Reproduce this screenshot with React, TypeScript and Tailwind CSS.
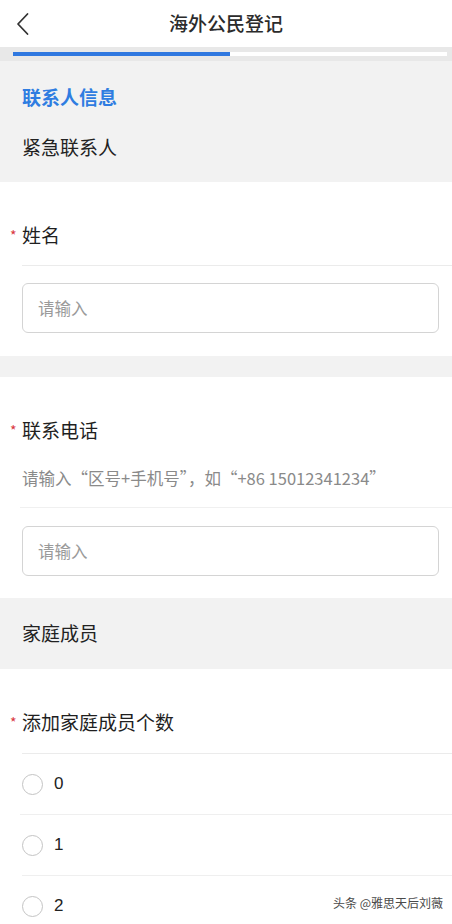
import React from "react";

const font = { fontFamily: '"Noto Sans CJK SC", "Noto Sans", sans-serif' };

function Star() {
  return <span className="absolute left-[10px] top-[3px] text-[14px] leading-[20px] text-[#d9363e]">*</span>;
}

function Label({ text }: { text: string }) {
  return (
    <div className="relative pl-[22px] text-[19px] leading-[26px] text-[#1f1f1f]">
      <Star />
      {text}
    </div>
  );
}

function Input() {
  return (
    <div className="ml-[22px] mr-[13px] h-[50px] rounded-[6px] border border-[#d4d4d4] flex items-center pl-[15px] text-[16.5px] text-[#9a9a9a]">
      请输入
    </div>
  );
}

function Radio({ v }: { v: string }) {
  return (
    <div className="h-[60px] flex items-center pl-[22px]">
      <div className="w-[21px] h-[21px] rounded-full border border-[#c4c4c4]" />
      <span className="ml-[11px] text-[17px] text-[#222]" style={{ fontFamily: '"Liberation Sans", "Noto Sans", sans-serif' }}>{v}</span>
    </div>
  );
}

export default function App() {
  return (
    <div className="relative w-[452px] h-[924px] overflow-hidden bg-white" style={font}>
      {/* header */}
      <div className="relative h-[47px] flex items-center justify-center">
        <svg className="absolute left-[14px] top-[12px]" width="18" height="24" viewBox="0 0 18 24">
          <path d="M13.5 2 L4 12 L13.5 22" fill="none" stroke="#333" strokeWidth="1.8" strokeLinecap="round" strokeLinejoin="round" />
        </svg>
        <span className="text-[19px] font-medium text-[#2b2b2b] leading-[26px] -mt-[2px]">海外公民登记</span>
      </div>
      {/* progress */}
      <div className="h-[14px] bg-[#e8e8e8] pt-[5px] pl-[13px] pr-[5px]">
        <div className="flex h-[4px]">
          <div className="w-[217px] bg-[#2f78e0]" />
          <div className="flex-1 bg-white" />
        </div>
      </div>
      {/* contact info section */}
      <div className="bg-[#f2f2f2] pt-[23px] pb-[22px] px-[22px]">
        <div className="text-[19px] leading-[26px] font-bold text-[#2f7de1]">联系人信息</div>
        <div className="mt-[24px] text-[19px] leading-[26px] text-[#222]">紧急联系人</div>
      </div>
      {/* name */}
      <div className="pt-[40px] pb-[23px]">
        <Label text="姓名" />
        <div className="ml-[22px] mt-[17px] h-px bg-[#ebebeb]" />
        <div className="mt-[17px]">
          <Input />
        </div>
      </div>
      <div className="h-[21px] bg-[#f2f2f2]" />
      {/* phone */}
      <div className="pt-[40px] pb-[22px]">
        <Label text="联系电话" />
        <div className="mt-[22px] pl-[22px] text-[16.5px] leading-[26px] text-[#8a8a8a]">
          请输入“区号+手机号”，如“+86 15012341234”
        </div>
        <div className="ml-[20px] mt-[16px] h-px bg-[#f0f0f0]" />
        <div className="mt-[18px]">
          <Input />
        </div>
      </div>
      {/* family */}
      <div className="h-[71px] bg-[#f2f2f2] flex items-center px-[22px] text-[19px] text-[#222]">家庭成员</div>
      <div className="pt-[40px]">
        <Label text="添加家庭成员个数" />
        <div className="ml-[22px] mt-[18px] h-px bg-[#ebebeb]" />
        <Radio v="0" />
        <div className="ml-[20px] h-px bg-[#efefef]" />
        <Radio v="1" />
        <div className="ml-[22px] h-px bg-[#efefef]" />
        <Radio v="2" />
      </div>
      {/* watermark */}
      <div className="absolute right-[9px] top-[894px] text-[12px] leading-[18px] text-[#4a4a4a]">头条 @雅思天后刘薇</div>
    </div>
  );
}
